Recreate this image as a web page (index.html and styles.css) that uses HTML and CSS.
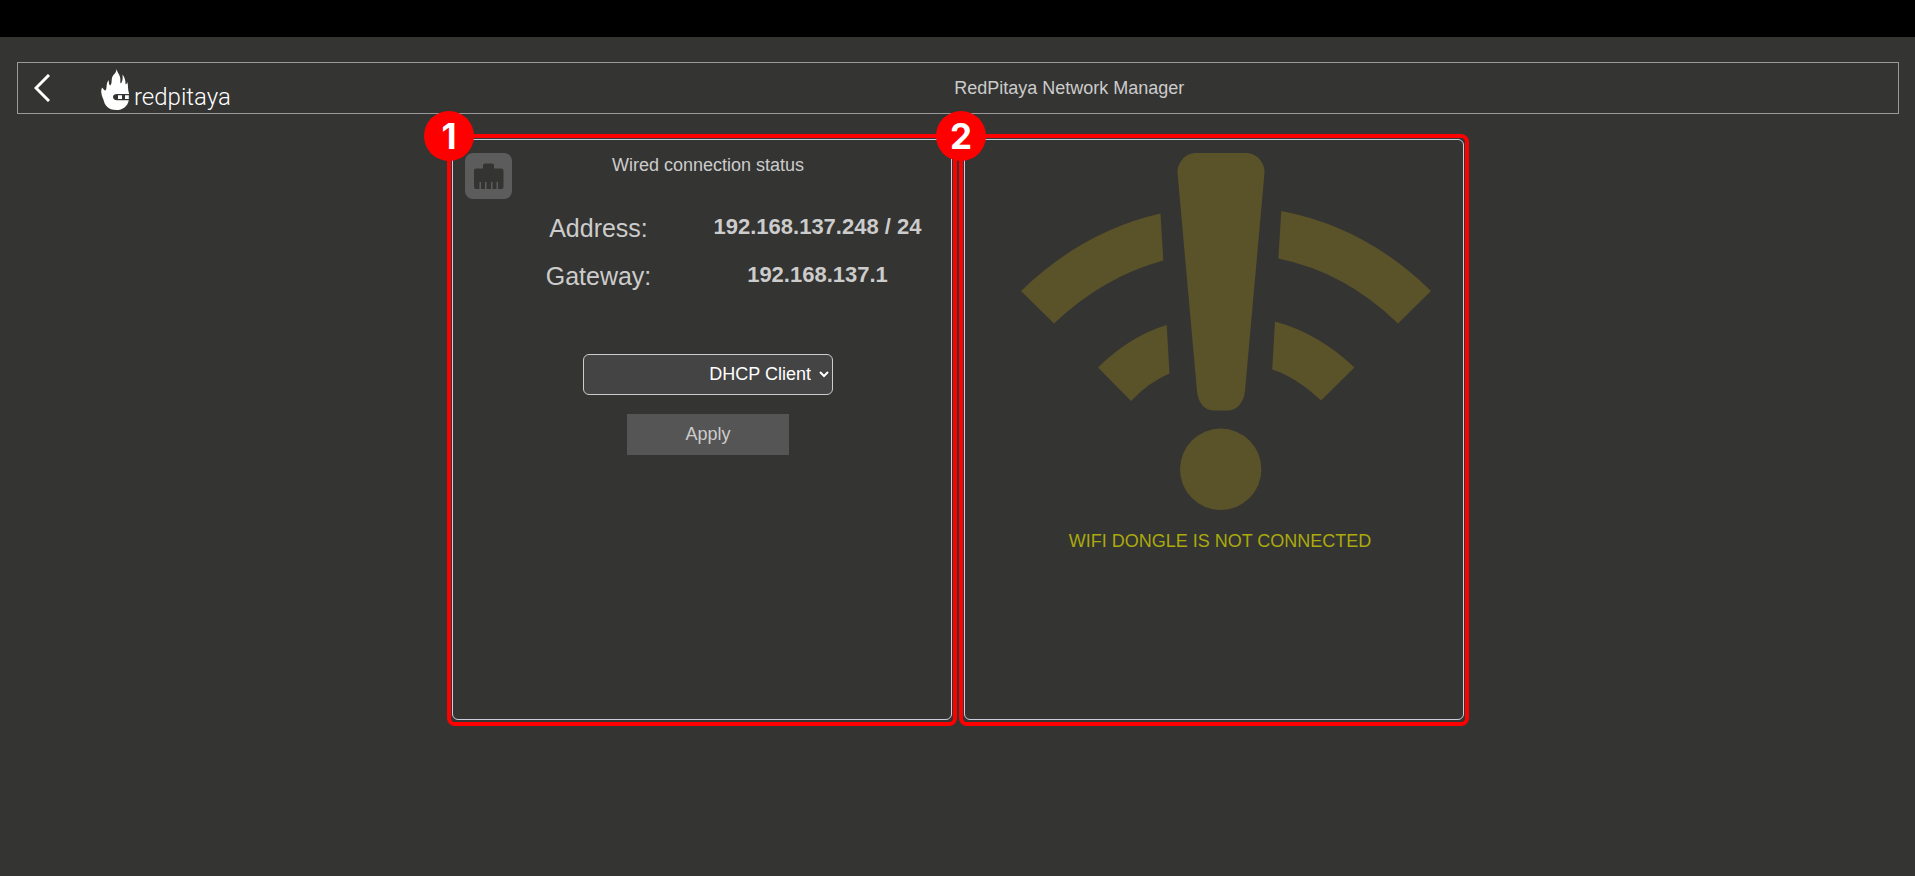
FILE: index.html
```html
<!DOCTYPE html>
<html lang="en">
<head>
<meta charset="utf-8">
<title>RedPitaya Network Manager</title>
<link rel="stylesheet" href="styles.css">
</head>
<body>
<div class="topbar"></div>
<header class="header">
  <div class="brand">
    <a class="back" href="#" aria-label="Back">
      <svg width="16" height="28" viewBox="0 0 16 28"><path d="M15 1L2 14L15 27" fill="none" stroke="#fff" stroke-width="3"/></svg>
    </a>
    <a class="logo" href="#">
      <svg width="28" height="41" viewBox="0 0 28 41">
        <path fill="#fff" d="M15.500 0C16 3 19 5.500 19.300 9.500C19.500 12 19 13.500 19.800 14.500C21.500 13 22 9.500 21.500 5.500C23.500 8 24.600 11 24.500 14.500C24.500 16 25.500 15.500 26.300 13C27.500 16.500 26.500 20 28 24.500V25H16C13.500 25 12 26.300 12 28C12 29.800 13.500 31.200 16 31.200H27.800C26.500 37.500 22 41 15 41C9 41 4.500 37.800 3 32.500C2.300 29.500.5 27 .3 23.500C.1 21.500.5 20 1 18.500C2.500 20 3 21.500 4.500 21.500C6.500 19 4.500 15.500 7.500 11C8 13.500 7.800 15.500 9 16.500C11.500 15 10 11.500 11.300 8C12.500 5 15.500 4 15.500 0Z"/>
        <path fill="#fff" d="M17 26.200H21V30H17ZM24 26.200H27.800V30H24Z"/>
      </svg>
      <span class="logo-text">redpitaya</span>
    </a>
  </div>
  <h1 class="title">RedPitaya Network Manager</h1>
</header>

<main class="panels">
  <section class="frame">
    <span class="badge">1</span>
    <div class="panel">
      <div class="panel-head">
        <svg width="47" height="46" viewBox="0 0 47 46">
          <rect width="47" height="46" rx="8" fill="#5c5c5c"/>
          <path fill="#343432" d="M11 15.500H18V12.500Q18 10.500 20 10.500H27Q29 10.500 29 12.500V15.500H36Q38.500 15.500 38.500 18V34Q38.500 36 36.500 36H33V29H31.500V36H27.500V29H26V36H21.500V29H20V36H16V29H14.500V36H11Q9 36 9 34V17.500Q9 15.500 11 15.500Z"/>
        </svg>
        <h2 class="panel-title">Wired connection status</h2>
      </div>
      <dl class="info">
        <dt>Address:</dt><dd>192.168.137.248 / 24</dd>
        <dt>Gateway:</dt><dd>192.168.137.1</dd>
      </dl>
      <form class="mode">
        <select class="select" aria-label="Connection mode">
          <option>DHCP Client</option>
          <option>Static</option>
        </select>
        <button class="apply" type="button">Apply</button>
      </form>
    </div>
  </section>

  <section class="frame">
    <span class="badge">2</span>
    <div class="panel wifi">
      <svg class="wifi-icon" viewBox="1010 153 421 357" fill="#5a5229">
        <path d="M1196 153H1246C1256 153 1265 162 1264.500 173L1245 391C1244 402 1237 410.500 1228 410.500H1213.500C1204 410.500 1198 402 1197 391L1177.500 173C1177 162 1186 153 1196 153Z"/>
        <circle cx="1220.700" cy="469.300" r="40.700"/>
        <path d="M1021 291Q1083 231 1160.500 213.500L1163.300 260.500Q1103 277 1054 323.500Z"/>
        <path d="M1281.300 211Q1366 227 1431 291L1398 323.500Q1345 272 1278.300 258.500Z"/>
        <path d="M1098 367.500Q1130 336 1166.700 325L1169.500 373.500Q1149 382 1131 401Z"/>
        <path d="M1275 321.500Q1318 333 1354.500 367.500L1321 400.500Q1296 377 1272.200 369.500Z"/>
      </svg>
      <p class="wifi-text">WIFI DONGLE IS NOT CONNECTED</p>
    </div>
  </section>
</main>
</body>
</html>
```

FILE: styles.css
```css
* { box-sizing: border-box; }

body {
  margin: 0;
  background: #343432;
  color: #ccc;
  font: 18px/25px "Liberation Sans", Arial, sans-serif;
}

h1, h2, p, dl, dd { margin: 0; }

svg { display: block; }

.topbar { height: 37px; background: #000; }

.header {
  display: grid;
  grid-template-columns: 49.8% 1fr;
  align-items: center;
  height: 52px;
  margin: 25px 16px 0 17px;
  border: 1px solid #999;
}

.brand {
  display: flex;
  align-items: center;
  gap: 51px;
  padding-left: 16px;
}

.logo {
  display: flex;
  align-items: center;
  gap: 5px;
  padding-top: 2px;
  color: #fff;
  text-decoration: none;
}

.logo-text {
  padding-top: 16px;
  font: 300 24px/30px Roboto, sans-serif;
}

.title, .panel-title {
  font-size: 18px;
  font-weight: 400;
}

.panels {
  display: flex;
  justify-content: center;
  gap: 2px;
  margin-top: 20px;
  padding-left: 1px;
}

.frame {
  position: relative;
  display: flex;
  flex: 0 1 510px;
  min-height: 592px;
  padding: 1px 1px 2px;
  border: 4px solid #f00;
  border-radius: 8px;
}

.badge {
  position: absolute;
  top: -27px;
  left: -27px;
  width: 50px;
  height: 50px;
  border-radius: 50%;
  background: #f00;
  color: #fff;
  font: 700 35px/50px Inter, sans-serif;
  text-align: center;
}

.panel {
  flex: 1;
  padding: 13px 0 0 12px;
  border: 1px solid #ccd;
  border-radius: 6px;
}

.panel-head {
  display: grid;
  grid-template-columns: 47px 1fr 47px;
}

.panel-title { text-align: center; }

.info {
  display: grid;
  grid-template-columns: 1fr 1fr;
  grid-auto-rows: 48px;
  align-items: center;
  margin: 5px 24px 0;
  text-align: center;
}

.info dt { font-size: 25px; }

.info dd {
  padding-bottom: 4px;
  font-size: 22px;
  font-weight: 700;
}

.mode {
  display: flex;
  flex-direction: column;
  align-items: center;
  gap: 19px;
  margin-top: 54px;
}

.select {
  width: 250px;
  height: 41px;
  padding: 0 5px 1px;
  border: 1px solid #ccc;
  border-radius: 6px;
  background: #444;
  color: #fff;
  font: inherit;
  text-align: right;
  text-align-last: right;
}

.apply {
  width: 162px;
  height: 41px;
  border: 0;
  background: #555;
  color: #ccc;
  font: inherit;
}

.wifi {
  display: flex;
  flex-direction: column;
  align-items: center;
  gap: 19px;
}

.wifi-icon { width: 421px; max-width: 100%; }

.wifi-text { color: #aaaa0c; }
```
